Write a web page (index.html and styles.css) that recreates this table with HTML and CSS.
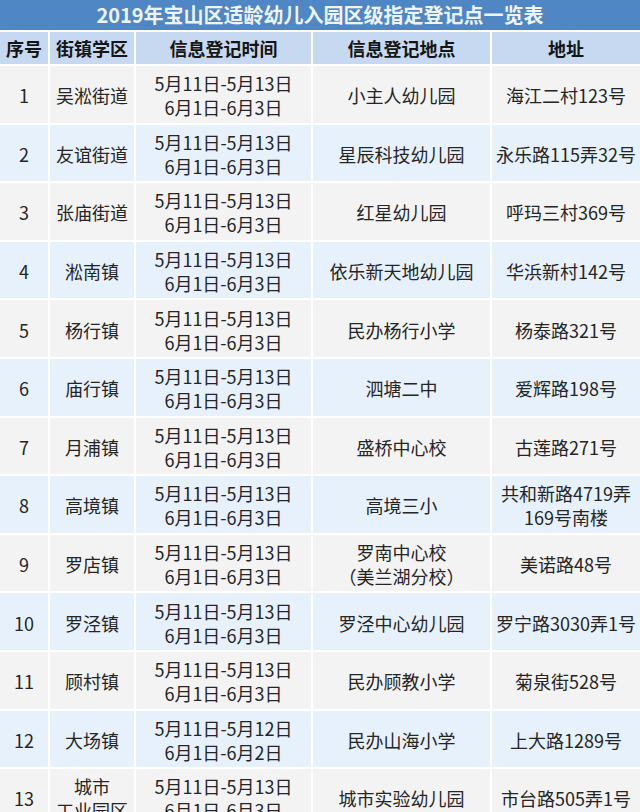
FILE: index.html
```html
<!DOCTYPE html>
<html lang="zh">
<head>
<meta charset="utf-8">
<title>2019年宝山区适龄幼儿入园区级指定登记点一览表</title>
<link rel="stylesheet" href="styles.css">
</head>
<body>
<div class="sheet">
  <div class="title">2019年宝山区适龄幼儿入园区级指定登记点一览表</div>
  <div class="row head">
    <div class="cell">序号</div><div class="cell">街镇学区</div><div class="cell">信息登记时间</div><div class="cell">信息登记地点</div><div class="cell">地址</div>
  </div>
  <div class="row odd">
    <div class="cell">1</div><div class="cell">吴淞街道</div><div class="cell">5月11日-5月13日<br>6月1日-6月3日</div><div class="cell">小主人幼儿园</div><div class="cell">海江二村123号</div>
  </div>
  <div class="row even">
    <div class="cell">2</div><div class="cell">友谊街道</div><div class="cell">5月11日-5月13日<br>6月1日-6月3日</div><div class="cell">星辰科技幼儿园</div><div class="cell">永乐路115弄32号</div>
  </div>
  <div class="row odd">
    <div class="cell">3</div><div class="cell">张庙街道</div><div class="cell">5月11日-5月13日<br>6月1日-6月3日</div><div class="cell">红星幼儿园</div><div class="cell">呼玛三村369号</div>
  </div>
  <div class="row even">
    <div class="cell">4</div><div class="cell">淞南镇</div><div class="cell">5月11日-5月13日<br>6月1日-6月3日</div><div class="cell">依乐新天地幼儿园</div><div class="cell">华浜新村142号</div>
  </div>
  <div class="row odd">
    <div class="cell">5</div><div class="cell">杨行镇</div><div class="cell">5月11日-5月13日<br>6月1日-6月3日</div><div class="cell">民办杨行小学</div><div class="cell">杨泰路321号</div>
  </div>
  <div class="row even">
    <div class="cell">6</div><div class="cell">庙行镇</div><div class="cell">5月11日-5月13日<br>6月1日-6月3日</div><div class="cell">泗塘二中</div><div class="cell">爱辉路198号</div>
  </div>
  <div class="row odd">
    <div class="cell">7</div><div class="cell">月浦镇</div><div class="cell">5月11日-5月13日<br>6月1日-6月3日</div><div class="cell">盛桥中心校</div><div class="cell">古莲路271号</div>
  </div>
  <div class="row even">
    <div class="cell">8</div><div class="cell">高境镇</div><div class="cell">5月11日-5月13日<br>6月1日-6月3日</div><div class="cell">高境三小</div><div class="cell">共和新路4719弄<br>169号南楼</div>
  </div>
  <div class="row odd">
    <div class="cell">9</div><div class="cell">罗店镇</div><div class="cell">5月11日-5月13日<br>6月1日-6月3日</div><div class="cell">罗南中心校<br>（美兰湖分校）</div><div class="cell">美诺路48号</div>
  </div>
  <div class="row even">
    <div class="cell">10</div><div class="cell">罗泾镇</div><div class="cell">5月11日-5月13日<br>6月1日-6月3日</div><div class="cell">罗泾中心幼儿园</div><div class="cell">罗宁路3030弄1号</div>
  </div>
  <div class="row odd">
    <div class="cell">11</div><div class="cell">顾村镇</div><div class="cell">5月11日-5月13日<br>6月1日-6月3日</div><div class="cell">民办顾教小学</div><div class="cell">菊泉街528号</div>
  </div>
  <div class="row even">
    <div class="cell">12</div><div class="cell">大场镇</div><div class="cell">5月11日-5月12日<br>6月1日-6月2日</div><div class="cell">民办山海小学</div><div class="cell">上大路1289号</div>
  </div>
  <div class="row odd">
    <div class="cell">13</div><div class="cell">城市<br>工业园区</div><div class="cell">5月11日-5月13日<br>6月1日-6月3日</div><div class="cell">城市实验幼儿园</div><div class="cell">市台路505弄1号</div>
  </div>
</div>
</body>
</html>
```

FILE: styles.css
```css
html, body {
  margin: 0;
  padding: 0;
  background: #ffffff;
}

body {
  font-family: "Noto Sans CJK SC", "Noto Sans", sans-serif;
  color: #252525;
  font-size: 18px;
  line-height: 24px;
}

.sheet {
  display: flex;
  flex-direction: column;
  gap: 2px;
  width: 640px;
}

.title {
  height: 30px;
  background: #4f86c4;
  color: #eef4fb;
  font-size: 20px;
  font-weight: bold;
  display: flex;
  align-items: center;
  justify-content: center;
  line-height: 30px;
  letter-spacing: 0;
}

.row {
  display: grid;
  grid-template-columns: 48px 84px 175px 177px 1fr;
  gap: 2px;
  height: 56.6px;
}

.row.head {
  height: 32px;
}

.cell {
  display: flex;
  align-items: center;
  justify-content: center;
  text-align: center;
  padding-top: 2px;
  box-sizing: border-box;
  white-space: nowrap;
}

.head .cell {
  background: #c6d9f0;
  font-weight: bold;
  color: #151515;
  padding-top: 0;
}

.odd .cell {
  background: #f3f3f3;
}

.even .cell {
  background: #e7f1fb;
}
```
